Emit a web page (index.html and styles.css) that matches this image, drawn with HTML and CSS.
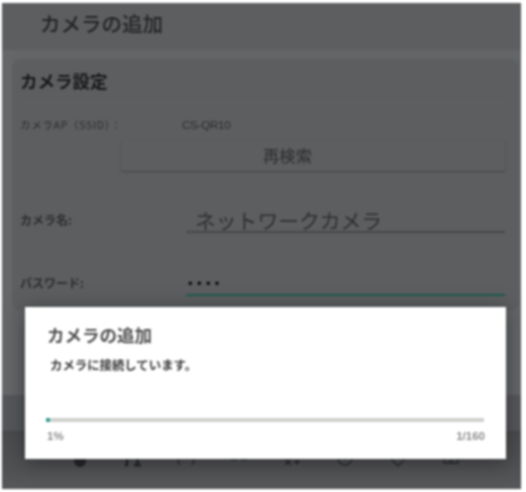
FILE: index.html
```html
<!DOCTYPE html>
<html lang="ja">
<head>
<meta charset="utf-8">
<title>カメラの追加</title>
<link rel="stylesheet" href="styles.css">
</head>
<body>
<div class="shot">
  <div class="frame">
    <header class="appbar">カメラの追加</header>
    <main class="content">
      <section class="card">
        <h2 class="card-title">カメラ設定</h2>
        <div class="ssid-row">
          <span class="ssid-label">カメラAP（SSID）：</span>
          <span class="ssid-value">CS-QR10</span>
        </div>
        <div class="button">再検索</div>
        <div class="field field-name">
          <span class="field-label">カメラ名:</span>
          <span class="field-input">ネットワークカメラ</span>
        </div>
        <div class="field field-pass">
          <span class="field-label">パスワード:</span>
          <span class="field-input field-input-active"><span class="dots">••••</span></span>
        </div>
      </section>
      <div class="bar"></div>
      <nav class="nav">
        <svg class="ico" viewBox="0 0 20 20"><circle cx="10" cy="3" r="6" fill="#222325"/></svg>
        <svg class="ico" viewBox="0 0 20 20"><path d="M2 7h3M4 0v7M11 7h7M14.500 0v7" stroke="#222325" stroke-width="2.500" fill="none"/></svg>
        <svg class="ico" viewBox="0 0 20 20"><path d="M3 0q-2 4 1 7M17 0q2 4-1 7" stroke="#2a2b2d" stroke-width="1.500" fill="none"/></svg>
        <svg class="ico" viewBox="0 0 20 20"><path d="M2 1.500h6M12 1.500h6" stroke="#2a2b2d" stroke-width="1.500" fill="none"/></svg>
        <svg class="ico" viewBox="0 0 20 20"><path d="M3 1l6 6M9 1l-6 6M12 4h6M15 1v6" stroke="#2a2b2d" stroke-width="1.600" fill="none"/></svg>
        <svg class="ico" viewBox="0 0 20 20"><circle cx="10" cy="0" r="7" stroke="#2a2b2d" stroke-width="1.500" fill="none"/><path d="M10 0v2" stroke="#2a2b2d" stroke-width="1.500"/></svg>
        <svg class="ico" viewBox="0 0 20 20"><path d="M2 0l8 8 8-8" stroke="#2a2b2d" stroke-width="1.500" fill="none"/></svg>
        <svg class="ico" viewBox="0 0 20 20"><path d="M3 0v5h14V0M8 3h4" stroke="#2a2b2d" stroke-width="1.500" fill="none"/></svg>
      </nav>
    </main>
    <aside class="dialog">
      <h1 class="dialog-title">カメラの追加</h1>
      <p class="dialog-text">カメラに接続しています。</p>
      <div class="progress"><div class="progress-fill"></div></div>
      <div class="progress-info"><span>1%</span><span>1/160</span></div>
    </aside>
  </div>
</div>
</body>
</html>
```
FILE: styles.css
```css
* { box-sizing: border-box; }
html, body { margin: 0; padding: 0; background: #fff; }
body { width: 526px; height: 492px; overflow: hidden; }
.shot {
  width: 526px;
  height: 492px;
  padding: 3px 5px 3px 2px;
  filter: blur(0.8px);
  font-family: "Noto Sans CJK JP", "Liberation Sans", sans-serif;
}
.frame {
  position: relative;
  width: 519px;
  height: 486px;
  background: #666769;
  display: flex;
  flex-direction: column;
  overflow: hidden;
}
.appbar {
  height: 47px;
  flex: none;
  background: #5d5e60;
  color: #232426;
  font-size: 20.500px;
  font-weight: 500;
  line-height: 41px;
  padding-left: 38px;
}
.content {
  flex: 1;
  display: flex;
  flex-direction: column;
  margin-left: 10px;
  padding-top: 9px;
  background: #636567;
}
.card {
  flex: none;
  height: 252px;
  margin-right: 2px;
  background: #5c5e60;
  border-radius: 9px;
  padding: 9px 0 0 8px;
  color: #343537;
}
.card-title {
  margin: 0 8px 0 0;
  height: 36px;
  font-size: 17.500px;
  line-height: 26px;
  font-weight: 700;
  color: #17181a;
  border-bottom: 1px solid #606264;
}
.ssid-row {
  display: flex;
  height: 36px;
  padding-top: 13px;
  font-size: 10.500px;
  line-height: 16px;
  color: #2c2d2f;
}
.ssid-label { width: 162px; flex: none; letter-spacing: 0.7px; white-space: nowrap; }
.ssid-value { font-family: "Liberation Sans", sans-serif; font-size: 11.500px; letter-spacing: -0.2px; }
.button {
  margin: 0 14px 0 101px;
  height: 31px;
  background: #5d5e60;
  border-radius: 2px;
  box-shadow: 0 1px 2px #444547;
  text-align: center;
  padding-right: 51px;
  font-size: 16.300px;
  line-height: 31px;
  color: #2c2d2f;
}
.field {
  display: flex;
  align-items: flex-end;
  margin-right: 14px;
}
.field-name { margin-top: 36px; height: 26px; }
.field-pass { margin-top: 37px; height: 26px; }
.field-label {
  width: 166px;
  flex: none;
  font-size: 12px;
  font-weight: 700;
  line-height: 16px;
  color: #2c2d2f;
  align-self: center;
}
.field-input {
  flex: 1;
  height: 100%;
  border-bottom: 2px solid #47484a;
  font-size: 20.800px;
  line-height: 26px;
  padding-left: 9px;
  color: #2e2f31;
  white-space: nowrap;
}
.field-input-active { border-bottom: 2px solid #205a50; padding-left: 2px; }
.dots {
  font-family: "Liberation Sans", sans-serif;
  font-size: 13px;
  line-height: 28px;
  letter-spacing: 4.400px;
  color: #08090b;
  display: block;
}
.bar {
  flex: none;
  height: 37px;
  margin: 84px -2px 0 -10px;
  background: #56575a;
  border-bottom: 1px solid #454648;
}
.nav {
  flex: 1;
  margin: 0 -2px 0 -10px;
  display: flex;
  background: linear-gradient(#4b4c4e, #505153 60%, #57585a);
  padding: 26px 0 0 68px;
  gap: 33px;
  align-items: flex-start;
}
.ico { width: 20px; height: 20px; flex: none; }
.dialog {
  position: absolute;
  left: 23px;
  top: 304px;
  width: 481px;
  height: 152px;
  background: #fff;
  box-shadow: 0 3px 18px rgba(20, 20, 22, 0.5);
  padding: 15px 21px 0 22px;
}
.dialog-title {
  margin: 0;
  font-size: 17.500px;
  line-height: 26px;
  font-weight: 700;
  color: #505050;
}
.dialog-text {
  margin: 9px 0 0 3px;
  font-size: 12.400px;
  line-height: 16px;
  font-weight: 700;
  color: #3a3a3a;
}
.progress {
  margin: 45px 1px 0 -1px;
  height: 4px;
  background: #cfd1cd;
}
.progress-fill { width: 4px; height: 4px; background: #109080; border-radius: 2px; }
.progress-info {
  display: flex;
  justify-content: space-between;
  margin: 7px 0 0;
  font-size: 11.500px;
  line-height: 14px;
  font-family: "Liberation Sans", sans-serif;
  font-weight: 700;
  color: #8e8e8e;
}
```
